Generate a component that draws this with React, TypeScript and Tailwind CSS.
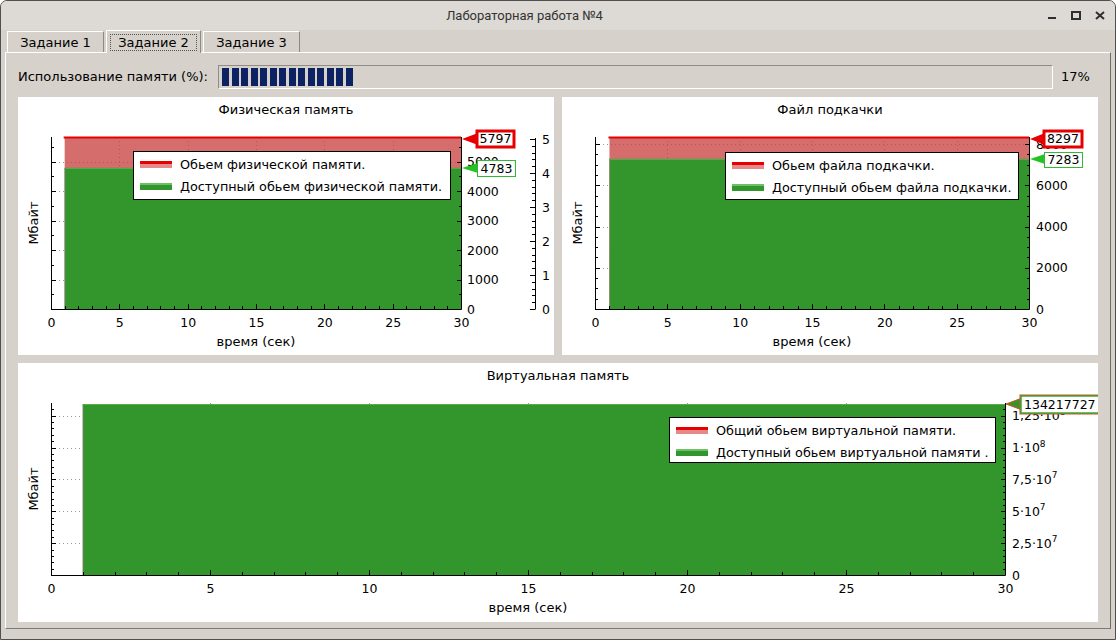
import type { ReactNode } from 'react'

const FONT = '"DejaVu Sans", "Liberation Sans", sans-serif'
const Y0 = 212
const TOP = 40

type Tag = {
  tipX: number
  tipY: number
  x: number
  y: number
  w: number
  h: number
  text: string
  kind: 'total' | 'avail' | 'virtual'
}

type ChartProps = {
  width: number
  height: number
  title: string
  x0: number
  x1: number
  scale: number
  total: number
  avail: number
  majorStep: number
  minorStep: number
  rightLabels: { v: number; label: ReactNode }[]
  rightLabelX: number
  legend: { x: number; y: number; w: number; h: number; lines: [string, string] }
  tags: Tag[]
  children?: ReactNode
}

function ValueTag({ tag }: { tag: Tag }) {
  const { tipX, tipY, x, y, w, h, text, kind } = tag
  const ah = kind === 'total' ? 6 : 5
  if (kind === 'total') {
    return (
      <g>
        <polygon points={`${tipX},${tipY} ${x + 1},${tipY - ah} ${x + 1},${tipY + ah}`} fill="#e60000" />
        <rect x={x} y={y} width={w} height={h} fill="#fff" stroke="#e60000" strokeWidth={3} />
        <text x={x + w / 2} y={y + h / 2 + 0.5} textAnchor="middle" dominantBaseline="middle" fontSize={12.5}>
          {text}
        </text>
      </g>
    )
  }
  if (kind === 'avail') {
    return (
      <g>
        <polygon points={`${tipX},${tipY} ${x + 1},${tipY - ah} ${x + 1},${tipY + ah}`} fill="#22c322" />
        <rect x={x + 0.5} y={y + 0.5} width={w} height={h} fill="#fff" stroke="#33b833" strokeWidth={1} />
        <text x={x + w / 2 + 0.5} y={y + h / 2 + 1} textAnchor="middle" dominantBaseline="middle" fontSize={12.5}>
          {text}
        </text>
      </g>
    )
  }
  return (
    <g>
      <polygon
        points={`${tipX},${tipY} ${x + 1},${tipY - 6} ${x + 1},${tipY + 6}`}
        fill="#33962d"
        stroke="#d9501e"
        strokeWidth={1}
      />
      <rect x={x} y={y} width={w} height={h} fill="#fff" stroke="#d9501e" strokeWidth={3} />
      <rect x={x} y={y} width={w} height={h} fill="#fff" stroke="#3aa83a" strokeWidth={1.5} />
      <text x={x + 3} y={y + h / 2 + 1} dominantBaseline="middle" fontSize={12.5}>
        {text}
      </text>
    </g>
  )
}

function Chart(p: ChartProps) {
  const xs = (t: number) => p.x0 + ((p.x1 - p.x0) * t) / 30
  const ys = (v: number) => Y0 - v * p.scale

  const yTicks: { y: number; major: boolean }[] = []
  for (let i = 1; i * p.minorStep * p.scale < Y0 - TOP - 2; i++) {
    const v = i * p.minorStep
    yTicks.push({ y: ys(v), major: Math.round(v / p.majorStep) * p.majorStep === v })
  }
  const majors = yTicks.filter((t) => t.major)
  const seconds = Array.from({ length: 31 }, (_, i) => i)

  return (
    <svg width={p.width} height={p.height} fontFamily={FONT} fill="#000" className="block">
      <text x={p.width / 2} y={17} textAnchor="middle" fontSize={13}>
        {p.title}
      </text>

      {/* grid */}
      <g stroke="#9a9a9a" strokeDasharray="1 3" strokeWidth={1}>
        {majors.map((t, i) => (
          <line key={i} x1={p.x0} x2={p.x1} y1={Math.round(t.y) + 0.5} y2={Math.round(t.y) + 0.5} />
        ))}
        {[5, 10, 15, 20, 25].map((t) => (
          <line key={t} x1={Math.round(xs(t)) + 0.5} x2={Math.round(xs(t)) + 0.5} y1={TOP} y2={Y0} />
        ))}
      </g>

      {/* data */}
      <rect x={xs(1)} y={ys(p.total)} width={p.x1 - xs(1)} height={Y0 - ys(p.total)} fill="#c83c3c" opacity={0.75} />
      <rect x={xs(1)} y={ys(p.avail)} width={p.x1 - xs(1)} height={Y0 - ys(p.avail)} fill="#33962d" />
      <line x1={xs(1)} x2={p.x1} y1={ys(p.avail) + 0.5} y2={ys(p.avail) + 0.5} stroke="#52b04a" />
      <line x1={xs(1) - 1} x2={p.x1} y1={ys(p.total) - 0.5} y2={ys(p.total) - 0.5} stroke="#e60000" strokeWidth={p.total === p.avail ? 0 : 2} />
      <line x1={xs(1) + 0.5} x2={xs(1) + 0.5} y1={ys(p.avail)} y2={Y0} stroke="#7a7a7a" opacity={0.6} />

      {/* axes */}
      <g stroke="#000" strokeWidth={1}>
        <line x1={p.x0 + 0.5} x2={p.x0 + 0.5} y1={TOP} y2={Y0 + 0.5} />
        <line x1={p.x0} x2={p.x1 + 0.5} y1={Y0 + 0.5} y2={Y0 + 0.5} />
        <line x1={p.x1 + 0.5} x2={p.x1 + 0.5} y1={TOP} y2={Y0 + 0.5} />
        {yTicks.map((t, i) => (
          <g key={i}>
            <line x1={p.x0} x2={p.x0 + (t.major ? 5 : 3)} y1={Math.round(t.y) + 0.5} y2={Math.round(t.y) + 0.5} />
            <line x1={p.x1 + 1} x2={p.x1 + 1 - (t.major ? 5 : 3)} y1={Math.round(t.y) + 0.5} y2={Math.round(t.y) + 0.5} />
          </g>
        ))}
        {seconds.slice(1, 30).map((t) => (
          <line
            key={t}
            x1={Math.round(xs(t)) + 0.5}
            x2={Math.round(xs(t)) + 0.5}
            y1={Y0}
            y2={Y0 - (t % 5 === 0 ? 5 : 3)}
          />
        ))}
      </g>

      {[0, 5, 10, 15, 20, 25, 30].map((t) => (
        <text key={t} x={xs(t) + 0.5} y={230} textAnchor="middle" fontSize={12.5}>
          {t}
        </text>
      ))}
      <text x={(p.x0 + p.x1) / 2} y={249} textAnchor="middle" fontSize={13}>
        время (сек)
      </text>
      <text x={0} y={0} transform={`translate(20 ${126}) rotate(-90)`} textAnchor="middle" fontSize={13}>
        Мбайт
      </text>

      {p.rightLabels.map((l) => (
        <text key={l.v} x={p.rightLabelX} y={ys(l.v) + 1} dominantBaseline="middle" fontSize={12.5}>
          {l.label}
        </text>
      ))}

      {/* legend */}
      <rect x={p.legend.x + 0.5} y={p.legend.y + 0.5} width={p.legend.w} height={p.legend.h} fill="#fff" stroke="#000" />
      <rect x={p.legend.x + 7} y={p.legend.y + 10} width={32} height={3} fill="#e60000" />
      <rect x={p.legend.x + 7} y={p.legend.y + 13} width={32} height={4} fill="#e48a8a" />
      <rect x={p.legend.x + 7} y={p.legend.y + 32} width={32} height={2} fill="#6cc066" />
      <rect x={p.legend.x + 7} y={p.legend.y + 34} width={32} height={5} fill="#33962d" />
      <text x={p.legend.x + 47} y={p.legend.y + 14} dominantBaseline="middle" fontSize={12.8}>
        {p.legend.lines[0]}
      </text>
      <text x={p.legend.x + 47} y={p.legend.y + 36} dominantBaseline="middle" fontSize={12.8}>
        {p.legend.lines[1]}
      </text>

      {p.children}
      {p.tags.map((t, i) => (
        <ValueTag key={i} tag={t} />
      ))}
    </svg>
  )
}

function Pow({ base, exp }: { base: string; exp: string }) {
  return (
    <>
      {base}
      <tspan dy={-5} fontSize={9}>
        {exp}
      </tspan>
    </>
  )
}

function ExtraAxis() {
  // second right-hand scale 0..5 in the physical memory chart
  const x = 517
  const ticks = Array.from({ length: 26 }, (_, i) => i)
  const yv = (v: number) => Y0 - v * 34
  return (
    <g>
      <g stroke="#000">
        <line x1={x + 0.5} x2={x + 0.5} y1={41} y2={Y0 + 0.5} />
        {ticks.map((i) => (
          <line
            key={i}
            x1={x}
            x2={x - (i % 5 === 0 ? 5 : 3)}
            y1={Math.round(yv(i / 5)) + 0.5}
            y2={Math.round(yv(i / 5)) + 0.5}
          />
        ))}
      </g>
      {[0, 1, 2, 3, 4, 5].map((v) => (
        <text key={v} x={x + 7} y={yv(v) + 1} dominantBaseline="middle" fontSize={12.5}>
          {v}
        </text>
      ))}
    </g>
  )
}

function Tab({ label, active }: { label: string; active?: boolean }) {
  if (active) {
    return (
      <div className="relative -mb-px h-[23px] w-[95px] border-l border-t border-white border-r border-r-[#8c8a85] bg-[#d6d2cb] px-[3px] pt-[3px]">
        <div className="flex h-[17px] items-center justify-center border border-dotted border-[#555]">{label}</div>
      </div>
    )
  }
  return (
    <div className="flex h-[21px] w-[97px] items-center justify-center border-l border-t border-white border-r border-r-[#8c8a85] pt-px">
      {label}
    </div>
  )
}

export default function App() {
  const blocks = Array.from({ length: 14 }, (_, i) => i)

  return (
    <div
      className="flex h-[640px] w-[1116px] flex-col overflow-hidden rounded-t-[7px] border border-[#4f4f4f] bg-[#d6d2cb] text-[13px] text-black"
      style={{ fontFamily: FONT }}
    >
      <div className="flex h-[29px] shrink-0 items-center bg-[#dddad5]">
        <div className="flex-1 text-center text-[13px] text-[#333]" style={{ fontFamily: 'Roboto, sans-serif' }}>
          Лабораторная работа №4
        </div>
        <div className="flex items-center gap-[14px] pr-[10px]">
          <svg width="9" height="9" viewBox="0 0 9 9">
            <rect x="0" y="6" width="8" height="2" fill="#2f2f2f" />
          </svg>
          <svg width="10" height="9" viewBox="0 0 10 9">
            <rect x="1" y="1" width="8" height="7" fill="none" stroke="#2f2f2f" strokeWidth="2" />
          </svg>
          <svg width="10" height="9" viewBox="0 0 10 9">
            <path d="M1 1 L9 8 M9 1 L1 8" stroke="#2f2f2f" strokeWidth="2" />
          </svg>
        </div>
      </div>

      <div className="flex h-[22px] shrink-0 items-end gap-[2px] pl-[6px]">
        <Tab label="Задание 1" />
        <Tab label="Задание 2" active />
        <Tab label="Задание 3" />
      </div>

      <div className="ml-[4px] h-[577px] w-[1106px] shrink-0 border-b border-l border-r border-t border-white border-b-[#7d7b77] border-r-[#6e6c68] px-[12px] pt-[12px]">
        <div className="flex h-[24px] items-center">
          <div className="w-[200px]">Использование памяти (%):</div>
          <div className="flex h-[24px] w-[835px] items-center gap-[2.5px] border border-[#8f8d88] border-b-white border-r-white px-[3px]">
            {blocks.map((b) => (
              <div key={b} className="h-[18px] w-[7px] bg-[#0d2263]" />
            ))}
          </div>
          <div className="ml-[8px]">17%</div>
        </div>

        <div className="mt-[8px] grid grid-cols-[536px_536px] gap-[8px]">
          <div className="h-[258px] overflow-hidden bg-white">
            <Chart
              width={536}
              height={258}
              title="Физическая память"
              x0={33}
              x1={443}
              scale={171 / 5797}
              total={5797}
              avail={4783}
              majorStep={1000}
              minorStep={500}
              rightLabels={[0, 1000, 2000, 3000, 4000, 5000].map((v) => ({ v, label: String(v) }))}
              rightLabelX={449}
              legend={{ x: 115, y: 54, w: 317, h: 48, lines: ['Обьем физической памяти.', 'Доступный обьем физической памяти.'] }}
              tags={[
                { tipX: 444, tipY: 42, x: 459, y: 34, w: 37, h: 16, text: '5797', kind: 'total' },
                { tipX: 444, tipY: 71, x: 459, y: 63, w: 38, h: 16, text: '4783', kind: 'avail' },
              ]}
            >
              <ExtraAxis />
            </Chart>
          </div>
          <div className="h-[258px] overflow-hidden bg-white">
            <Chart
              width={536}
              height={258}
              title="Файл подкачки"
              x0={33}
              x1={467}
              scale={171 / 8297}
              total={8297}
              avail={7283}
              majorStep={2000}
              minorStep={500}
              rightLabels={[0, 2000, 4000, 6000, 8000].map((v) => ({ v, label: String(v) }))}
              rightLabelX={474}
              legend={{ x: 163, y: 55, w: 293, h: 47, lines: ['Обьем файла подкачки.', 'Доступный обьем файла подкачки.'] }}
              tags={[
                { tipX: 468, tipY: 42, x: 482, y: 34, w: 38, h: 16, text: '8297', kind: 'total' },
                { tipX: 468, tipY: 62, x: 482, y: 55, w: 38, h: 15, text: '7283', kind: 'avail' },
              ]}
            />
          </div>
        </div>

        <div className="mt-[8px] h-[259px] w-[1080px] overflow-hidden bg-white">
          <Chart
            width={1080}
            height={259}
            title="Виртуальная память"
            x0={33}
            x1={987}
            scale={171 / 134217727}
            total={134217727}
            avail={134217727}
            majorStep={25000000}
            minorStep={5000000}
            rightLabels={[
              { v: 0, label: '0' },
              { v: 25000000, label: <Pow base="2,5·10" exp="7" /> },
              { v: 50000000, label: <Pow base="5·10" exp="7" /> },
              { v: 75000000, label: <Pow base="7,5·10" exp="7" /> },
              { v: 100000000, label: <Pow base="1·10" exp="8" /> },
              { v: 125000000, label: <Pow base="1,25·10" exp="8" /> },
            ]}
            rightLabelX={994}
            legend={{ x: 651, y: 54, w: 326, h: 45, lines: ['Общий обьем виртуальной памяти.', 'Доступный обьем виртуальной памяти .'] }}
            tags={[{ tipX: 988, tipY: 41, x: 1003, y: 33, w: 90, h: 17, text: '134217727', kind: 'virtual' }]}
          />
        </div>
      </div>
    </div>
  )
}
